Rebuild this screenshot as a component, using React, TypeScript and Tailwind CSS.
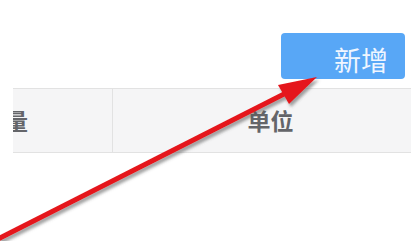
import React from "react";

export default function App() {
  return (
    <div
      className="relative w-[411px] h-[241px] bg-white overflow-hidden"
      style={{ fontFamily: '"Noto Sans CJK SC", "Noto Sans", sans-serif' }}
    >
      <div className="flex justify-end pr-[6px] pt-[33px] h-[88px]">
        <button className="w-[124px] h-[46px] rounded-[4px] bg-[#58a7f6] flex items-center justify-end pr-[17px] pt-[6px] text-[27px] leading-none text-[#f0f6ff]">
          新增
        </button>
      </div>
      <div className="ml-[13px] overflow-hidden border-t border-b border-[#e2e2e2] bg-[#f5f5f6] h-[65px] flex">
        <div className="w-[100px] shrink-0 border-r border-[#e2e2e2] flex items-center">
          <span className="ml-[-31px] whitespace-nowrap text-[23px] font-bold text-[#646569]">数量</span>
        </div>
        <div className="w-[313px] shrink-0 flex items-center justify-center">
          <span className="text-[23px] font-bold text-[#646569] pl-[2px]">单位</span>
        </div>
      </div>
      <svg
        className="absolute left-0 top-0 pointer-events-none"
        width="411"
        height="241"
        viewBox="0 0 411 241"
      >
        <defs>
          <filter id="sh" x="-20%" y="-20%" width="140%" height="140%">
            <feDropShadow dx="2" dy="3" stdDeviation="1.8" floodColor="#555" floodOpacity="0.55" />
          </filter>
        </defs>
        <g filter="url(#sh)">
          <line x1="-5" y1="240.5" x2="290" y2="91" stroke="#e5151a" strokeWidth="5" />
          <polygon points="317,77 278,85 289,104" fill="#e5151a" />
        </g>
      </svg>
    </div>
  );
}
